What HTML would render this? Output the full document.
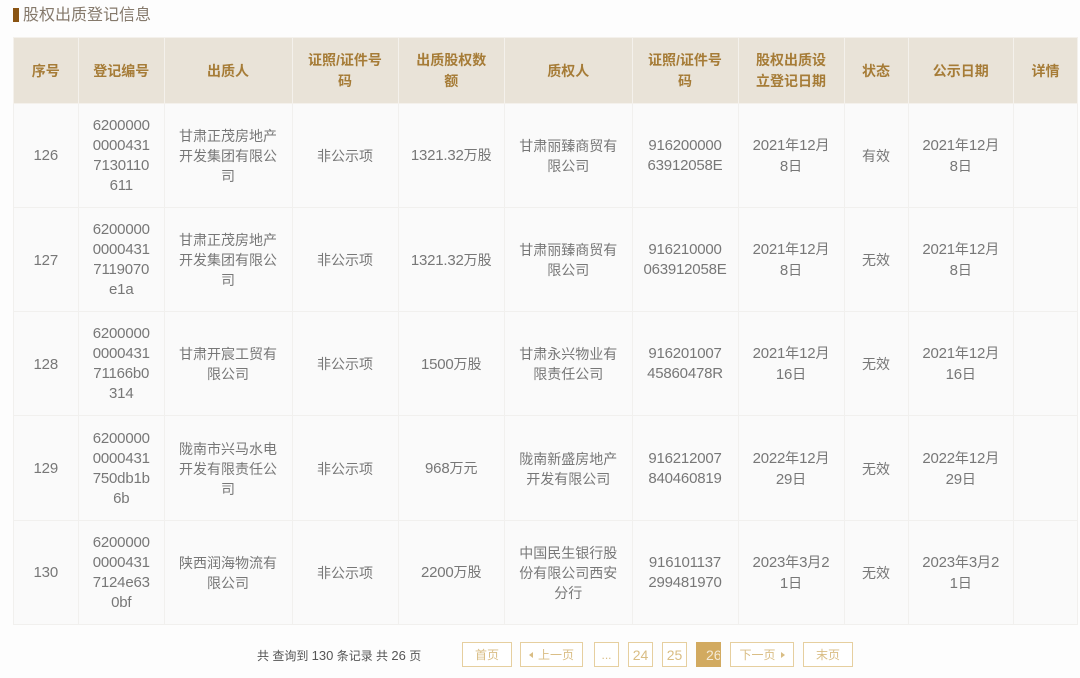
<!DOCTYPE html>
<html lang="zh"><head><meta charset="utf-8"><style>
html,body{margin:0;padding:0;width:1080px;height:678px;overflow:hidden;background:#fdfdfd}
body{position:relative;font-family:"Liberation Sans","Noto Sans CJK SC",sans-serif;color:#777;font-size:14px}
#w{position:absolute;left:0;top:0;width:1080px;height:678px;filter:blur(.3px)}
.bar{position:absolute;left:12.5px;top:8px;width:6px;height:14px;background:#8a5413}
.ttl{position:absolute;left:23px;top:6px;font-size:16px;line-height:20px;color:#85796b}
table{position:absolute;left:12.5px;top:36.6px;width:1064.5px;border-collapse:collapse;table-layout:fixed;background:#fafafa}
th,td{border:1px solid #f1f0ee;text-align:center;vertical-align:middle;line-height:20px;font-size:14px;word-break:break-all;box-sizing:border-box}
th{background:#e9e3d8;color:#a67c37;font-weight:bold;height:66px;line-height:21px;border-color:#f4f1ec;padding:2px 5px 0;white-space:nowrap}
td{height:104.3px;padding:1px 14px 0}
td.n,td.x{white-space:nowrap;padding:1px 2px 0}
.d,td.n{font-size:15px;letter-spacing:-.2px}
.info{position:absolute;left:257px;top:648px;font-size:12px;line-height:16px;color:#555;white-space:pre}
.info .e{font-size:13px}
.p{position:absolute;top:642px;height:25px;box-sizing:border-box;border:1px solid #e6cf9f;line-height:24px;text-align:center;font-size:12px;color:#d9bd84;background:#fff}
.p.b{font-size:14px}
.p.on{background:#d2aa60;border-color:#d2aa60;color:#f4ead6;overflow:hidden;text-indent:9px;white-space:nowrap;text-align:left;font-size:14px}
.tri{display:inline-block;width:0;height:0;border-top:3px solid transparent;border-bottom:3px solid transparent;vertical-align:1px}
.l{border-right:4px solid #d9bd84;margin-right:5px}.r{border-left:4px solid #d9bd84;margin-left:5px}
</style></head><body><div id="w">
<div class="bar"></div><div class="ttl">股权出质登记信息</div>
<table>
<colgroup><col style="width:65.5px"><col style="width:85.5px"><col style="width:128px"><col style="width:106px"><col style="width:106.5px"><col style="width:127.5px"><col style="width:106px"><col style="width:106px"><col style="width:64px"><col style="width:105.5px"><col style="width:64px"></colgroup>
<tr><th>序号</th><th>登记编号</th><th>出质人</th><th>证照/证件号<br>码</th><th>出质股权数<br>额</th><th>质权人</th><th>证照/证件号<br>码</th><th>股权出质设<br>立登记日期</th><th>状态</th><th>公示日期</th><th>详情</th></tr>
<tr><td><span class="d">126</span></td><td class="n">6200000<br>0000431<br>7130110<br>611</td><td>甘肃正茂房地产开发集团有限公司</td><td>非公示项</td><td class="x"><span class="d">1321.32</span>万股</td><td>甘肃丽臻商贸有限公司</td><td class="n">916200000<br>63912058E</td><td class="x"><span class="d">2021</span>年<span class="d">12</span>月<br><span class="d">8</span>日</td><td>有效</td><td class="x"><span class="d">2021</span>年<span class="d">12</span>月<br><span class="d">8</span>日</td><td></td></tr>
<tr><td><span class="d">127</span></td><td class="n">6200000<br>0000431<br>7119070<br>e1a</td><td>甘肃正茂房地产开发集团有限公司</td><td>非公示项</td><td class="x"><span class="d">1321.32</span>万股</td><td>甘肃丽臻商贸有限公司</td><td class="n">916210000<br>063912058E</td><td class="x"><span class="d">2021</span>年<span class="d">12</span>月<br><span class="d">8</span>日</td><td>无效</td><td class="x"><span class="d">2021</span>年<span class="d">12</span>月<br><span class="d">8</span>日</td><td></td></tr>
<tr><td><span class="d">128</span></td><td class="n">6200000<br>0000431<br>71166b0<br>314</td><td>甘肃开宸工贸有限公司</td><td>非公示项</td><td class="x"><span class="d">1500</span>万股</td><td>甘肃永兴物业有限责任公司</td><td class="n">916201007<br>45860478R</td><td class="x"><span class="d">2021</span>年<span class="d">12</span>月<br><span class="d">16</span>日</td><td>无效</td><td class="x"><span class="d">2021</span>年<span class="d">12</span>月<br><span class="d">16</span>日</td><td></td></tr>
<tr><td><span class="d">129</span></td><td class="n">6200000<br>0000431<br>750db1b<br>6b</td><td>陇南市兴马水电开发有限责任公司</td><td>非公示项</td><td class="x"><span class="d">968</span>万元</td><td>陇南新盛房地产开发有限公司</td><td class="n">916212007<br>840460819</td><td class="x"><span class="d">2022</span>年<span class="d">12</span>月<br><span class="d">29</span>日</td><td>无效</td><td class="x"><span class="d">2022</span>年<span class="d">12</span>月<br><span class="d">29</span>日</td><td></td></tr>
<tr><td><span class="d">130</span></td><td class="n">6200000<br>0000431<br>7124e63<br>0bf</td><td>陕西润海物流有限公司</td><td>非公示项</td><td class="x"><span class="d">2200</span>万股</td><td>中国民生银行股份有限公司西安分行</td><td class="n">916101137<br>299481970</td><td class="x"><span class="d">2023</span>年<span class="d">3</span>月<span class="d">2</span><br><span class="d">1</span>日</td><td>无效</td><td class="x"><span class="d">2023</span>年<span class="d">3</span>月<span class="d">2</span><br><span class="d">1</span>日</td><td></td></tr>
</table>
<div class="info">共 查询到 <span class="e">130</span> 条记录 共 <span class="e">26</span> 页</div>
<div class="p" style="left:462px;width:50px">首页</div>
<div class="p" style="left:520px;width:63px"><span class="tri l"></span>上一页</div>
<div class="p" style="left:594px;width:25px">...</div>
<div class="p b" style="left:628px;width:25px">24</div>
<div class="p b" style="left:662px;width:25px">25</div>
<div class="p on" style="left:696px;width:25px">26</div>
<div class="p" style="left:730px;width:64px">下一页<span class="tri r"></span></div>
<div class="p" style="left:803px;width:50px">末页</div>
</div></body></html>
